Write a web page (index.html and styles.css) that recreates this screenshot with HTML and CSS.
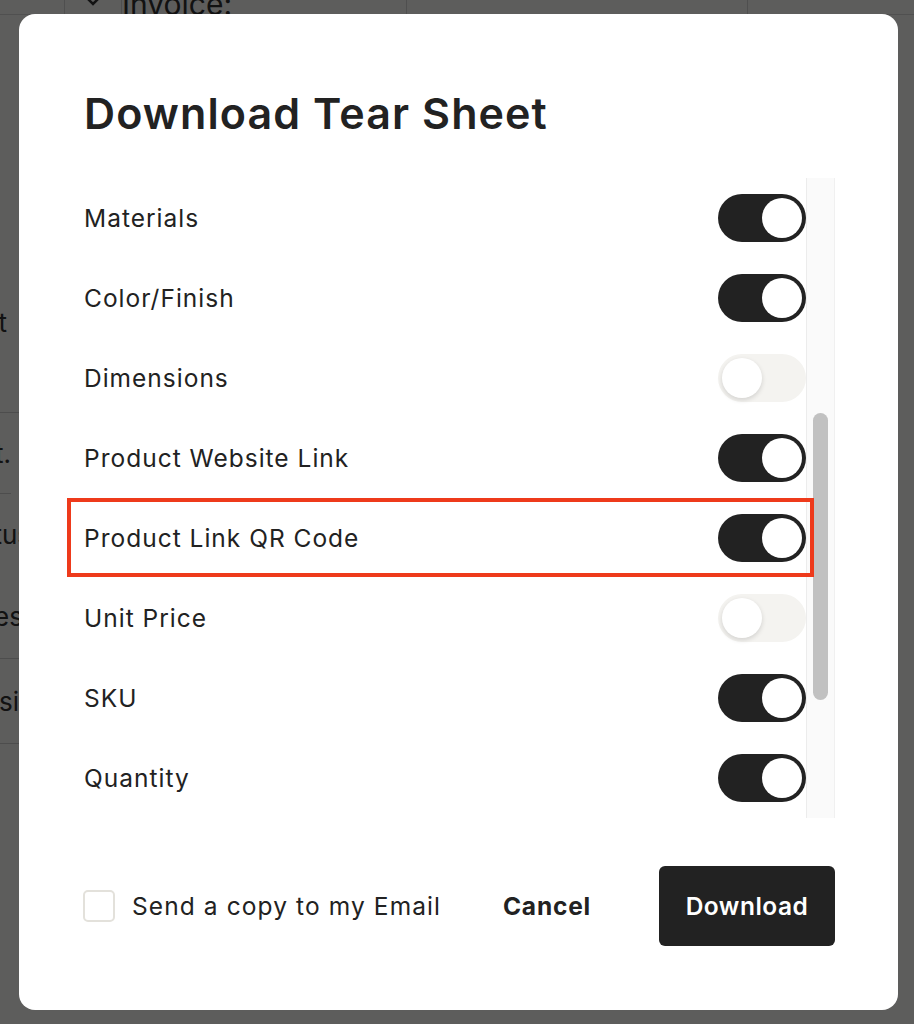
FILE: index.html
```html
<!DOCTYPE html>
<html lang="en">
<head>
<meta charset="utf-8">
<title>Download Tear Sheet</title>
<link rel="stylesheet" href="styles.css">
</head>
<body>
<div class="page">
  <div class="page-top">
    <div class="page-cell cell-icon">
      <svg width="22" height="14" viewBox="0 0 22 14"><path d="M3 2 L11 10 L19 2" fill="none" stroke="#333" stroke-width="2.5"/></svg>
    </div>
    <div class="page-cell cell-wide">Invoice:</div>
    <div class="page-cell cell-mid"></div>
    <div class="page-cell cell-rest"></div>
  </div>
  <div class="page-side">
    <div class="side-row side-row-a"><span>Accent</span></div>
    <div class="side-row side-row-b"><span>Est.</span></div>
    <div class="side-row side-row-c"><span>Status</span></div>
    <div class="side-row side-row-d"><span>Notes</span></div>
    <div class="side-row side-row-e"><span>Decision</span></div>
  </div>
</div>

<div class="overlay">
  <div class="modal" role="dialog" aria-labelledby="dlg-title">
    <h1 class="title" id="dlg-title">Download Tear Sheet</h1>

    <div class="list-wrap">
      <div class="list">
        <div class="row"><span class="label">Materials</span><span class="toggle on"><span class="knob"></span></span></div>
        <div class="row"><span class="label">Color/Finish</span><span class="toggle on"><span class="knob"></span></span></div>
        <div class="row"><span class="label">Dimensions</span><span class="toggle off"><span class="knob"></span></span></div>
        <div class="row"><span class="label">Product Website Link</span><span class="toggle on"><span class="knob"></span></span></div>
        <div class="row row-marked"><span class="label">Product Link QR Code</span><span class="toggle on"><span class="knob"></span></span><span class="highlight"></span></div>
        <div class="row"><span class="label">Unit Price</span><span class="toggle off"><span class="knob"></span></span></div>
        <div class="row"><span class="label">SKU</span><span class="toggle on"><span class="knob"></span></span></div>
        <div class="row"><span class="label">Quantity</span><span class="toggle on"><span class="knob"></span></span></div>
      </div>
      <div class="track"><div class="thumb"></div></div>
    </div>

    <div class="footer">
      <label class="check"><span class="box"></span><span class="check-text">Send a copy to my Email</span></label>
      <button class="btn-cancel" type="button">Cancel</button>
      <button class="btn-download" type="button">Download</button>
    </div>
  </div>
</div>
</body>
</html>
```

FILE: styles.css
```css
html, body {
  margin: 0;
  padding: 0;
}

body {
  width: 914px;
  height: 1024px;
  overflow: hidden;
  background: #ffffff;
  font-family: "Inter", "Liberation Sans", sans-serif;
  color: #222222;
  position: relative;
}

/* ---------- background page ---------- */
.page {
  width: 914px;
  height: 1024px;
  background: #fbfbfa;
  color: #333;
}

.page-top {
  display: flex;
  height: 14px;
  overflow: hidden;
  border-bottom: 1px solid #d9d9d9;
}

.page-cell {
  border-left: 1px solid #d6d6d6;
  font-size: 30px;
  line-height: 14px;
  color: #333;
}

.cell-icon {
  width: 56px;
  margin-left: 64px;
  display: flex;
  justify-content: center;
  align-items: flex-start;
}

.cell-icon svg {
  margin-top: -6px;
}

.cell-wide {
  width: 284px;
  line-height: 8px;
  font-size: 30px;
}

.cell-mid {
  width: 340px;
}

.cell-rest {
  flex: 1;
}

.page-side {
  display: flex;
  flex-direction: column;
  width: 64px;
  margin-top: 150px;
  border-right: 1px solid #d6d6d6;
}

.side-row {
  display: flex;
  justify-content: flex-end;
  align-items: center;
  border-bottom: 1px solid #d0d0d0;
  font-size: 26px;
  width: 83px;
  margin-left: -64px;
}

.side-row span {
  white-space: nowrap;
}

.side-row-a { height: 248px; align-items: flex-start; padding-top: 142px; box-sizing: border-box; padding-right: 12px; width: 83px; }
.side-row-b { height: 80px; width: 75px; }
.side-row-c { height: 80px; border-bottom: none; width: 95px; }
.side-row-d { height: 84px; width: 87px; }
.side-row-e { height: 84px; width: 114px; }

/* ---------- overlay & modal ---------- */
.overlay {
  position: absolute;
  inset: 0;
  background: rgba(0, 0, 0, 0.63);
  box-sizing: border-box;
  padding: 14px 16px 14px 19px;
}

.modal {
  width: 879px;
  height: 996px;
  box-sizing: border-box;
  background: #ffffff;
  border-radius: 16px;
  padding: 74px 63px 64px 65px;
  display: flex;
  flex-direction: column;
}

.title {
  margin: 0;
  font-size: 43px;
  line-height: 50px;
  font-weight: 600;
  letter-spacing: 1.1px;
  color: #222222;
}

.list-wrap {
  margin-top: 40px;
  height: 640px;
  display: flex;
}

.list {
  flex: 1;
  display: flex;
  flex-direction: column;
}

.row {
  position: relative;
  height: 80px;
  flex: none;
  display: flex;
  align-items: center;
  justify-content: space-between;
}

.label {
  font-size: 24.5px;
  font-weight: 400;
  color: #222222;
  letter-spacing: 1px;
}

.toggle {
  position: relative;
  width: 88px;
  height: 48px;
  border-radius: 24px;
  box-sizing: border-box;
  display: flex;
  align-items: center;
  padding: 0 4px;
}

.toggle.on {
  background: #222222;
  justify-content: flex-end;
}

.toggle.off {
  background: #f4f3f0;
  justify-content: flex-start;
}

.knob {
  width: 40px;
  height: 40px;
  border-radius: 50%;
  background: #ffffff;
}

.toggle.off .knob {
  box-shadow: 0 2px 5px rgba(0, 0, 0, 0.14);
}

.highlight {
  position: absolute;
  left: -17px;
  right: -8px;
  top: 0;
  height: 79px;
  box-sizing: border-box;
  border: 4px solid #ee3a1b;
  pointer-events: none;
}

.track {
  width: 27px;
  flex: none;
  background: #fafafa;
  border-left: 1px solid #ececec;
  border-right: 1px solid #f0f0f0;
  display: flex;
  justify-content: center;
}

.thumb {
  width: 15px;
  height: 287px;
  margin-top: 235px;
  border-radius: 8px;
  background: #c1c1c1;
}

/* ---------- footer ---------- */
.footer {
  margin-top: auto;
  height: 80px;
  display: flex;
  align-items: center;
}

.check {
  display: flex;
  align-items: center;
  gap: 17px;
  margin-left: -1px;
}

.box {
  width: 32px;
  height: 32px;
  box-sizing: border-box;
  border: 2px solid #e3e1db;
  border-radius: 5px;
  background: #fff;
}

.check-text {
  font-size: 24.5px;
  color: #222222;
  letter-spacing: 1.1px;
}

.btn-cancel {
  margin-left: auto;
  background: none;
  border: none;
  padding: 0;
  font-family: inherit;
  font-size: 24.5px;
  font-weight: 700;
  color: #222222;
  letter-spacing: 0.8px;
  margin-right: 68px;
}

.btn-download {
  height: 80px;
  width: 176px;
  background: #222222;
  border: none;
  border-radius: 6px;
  font-family: inherit;
  font-size: 24.5px;
  font-weight: 600;
  letter-spacing: 0.5px;
  color: #ffffff;
}
```
